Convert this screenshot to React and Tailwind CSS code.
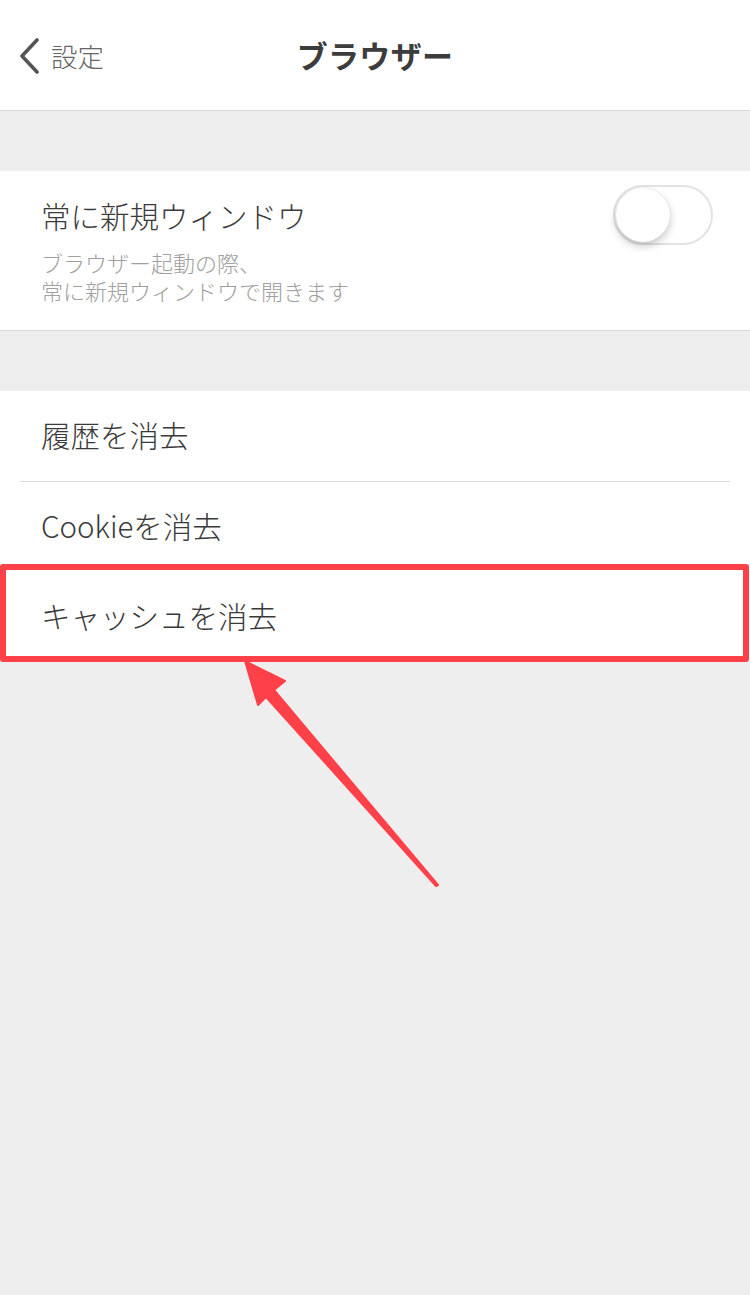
const font = { fontFamily: '"Noto Sans CJK JP", "Noto Sans", sans-serif' };

function Toggle() {
    return (
        <div className="relative w-[100px] h-[60px] rounded-full border-2 border-[#e3e3e3] bg-white">
            <div className="absolute left-[1px] top-[1px] w-[54px] h-[54px] rounded-full bg-white shadow-[0_4px_8px_rgba(0,0,0,0.22),0_0_1px_rgba(0,0,0,0.15)]" />
        </div>
    );
}

function Row({ label, children }) {
    return (
        <div className="relative h-[90px] flex items-center pl-[41px] pb-[4px] text-[29.5px] font-light text-[#3a3a3a] bg-white">
            {label}
            {children}
        </div>
    );
}

export default function App() {
    return (
        <div className="relative w-[750px] h-[1295px] bg-[#eeeeef] overflow-hidden" style={font}>
            {/* header */}
            <div className="relative h-[111px] bg-white border-b border-[#d8d8d8] flex items-center justify-center">
                <div className="absolute left-[18px] top-[38px] flex items-center">
                    <svg width="22" height="36" viewBox="0 0 22 36" fill="none">
                        <path d="M19 2 L4 18 L19 34" stroke="#555" strokeWidth="3.6" strokeLinecap="round" strokeLinejoin="round" />
                    </svg>
                    <span className="ml-[11px] text-[26.5px] font-light text-[#666] leading-none">設定</span>
                </div>
                <span className="text-[31px] font-bold text-[#3c3c3c] tracking-[0.01em]">ブラウザー</span>
            </div>

            <div className="h-[60px]" />

            {/* new window toggle */}
            <div className="h-[160px] bg-white border-b border-[#d8d8d8] flex justify-between pl-[41px] pr-[37px]">
                <div className="pt-[24px]">
                    <p className="text-[29.5px] font-light text-[#3a3a3a] leading-[40px]">常に新規ウィンドウ</p>
                    <div className="mt-[13px] text-[22px] font-light text-[#a0a0a0] leading-[28px]">
                        <p className="h-[28px]">ブラウザー起動の際、</p>
                        <p className="h-[28px]">常に新規ウィンドウで開きます</p>
                    </div>
                </div>
                <div className="pt-[14px]">
                    <Toggle />
                </div>
            </div>

            <div className="h-[60px]" />

            {/* clear data */}
            <div className="bg-white">
                <Row label="履歴を消去" />
                <div className="mx-[20px] h-px bg-[#dcdcdc]" />
                <Row label="Cookieを消去" />
                <Row label="キャッシュを消去">
                    <div className="absolute -top-[8px] left-0 right-px bottom-0 border-[6px] border-[#fe4149] rounded-[3px]" />
                </Row>
            </div>

            {/* arrow */}
            <svg className="absolute left-0 top-0" width="750" height="1295" viewBox="0 0 750 1295">
                <polygon
                    fill="#fe4149"
                    points="245,661 285,681 274,690 438,885 436,886 266,697 258,705"
                    strokeLinejoin="round"
                    stroke="#fe4149"
                    strokeWidth="2"
                />
            </svg>
        </div>
    );
}
